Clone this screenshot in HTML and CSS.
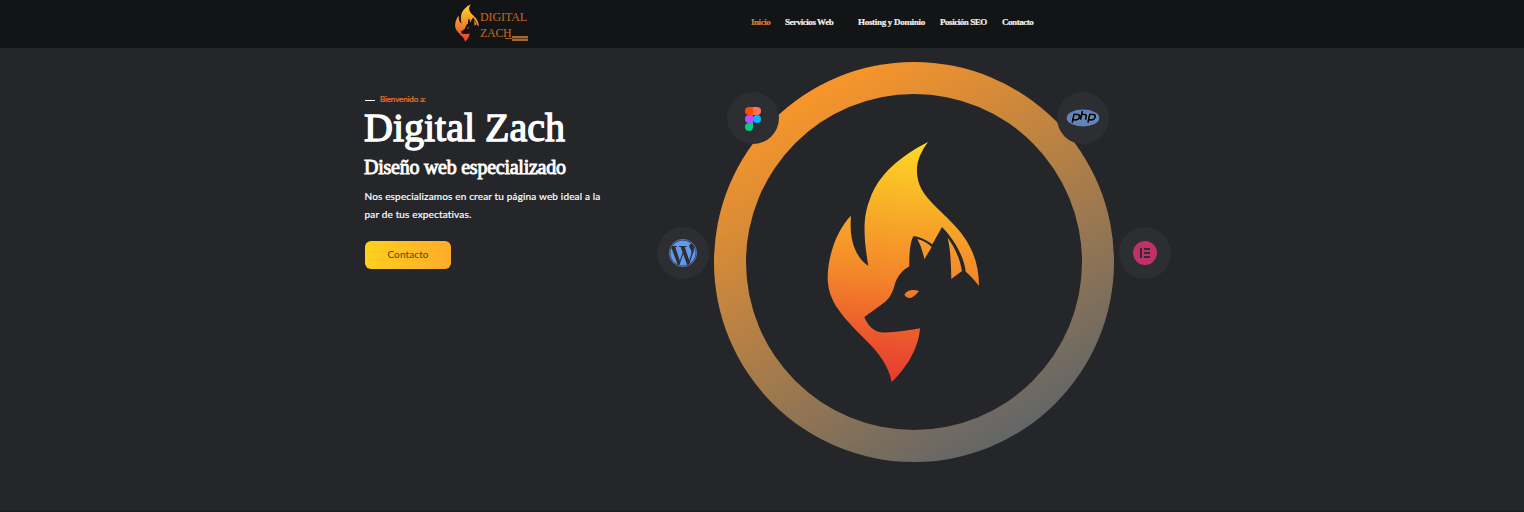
FILE: index.html
```html
<!DOCTYPE html>
<html lang="es">
<head>
<meta charset="utf-8">
<title>Digital Zach</title>
<link rel="stylesheet" href="styles.css">
</head>
<body>
<svg class="defs" width="0" height="0" aria-hidden="true">
  <defs>
    <linearGradient id="fire" gradientUnits="userSpaceOnUse" x1="640" y1="276" x2="590" y2="996">
      <stop offset="0" stop-color="#ffd724"/>
      <stop offset=".3" stop-color="#f7ac28"/>
      <stop offset=".58" stop-color="#f3832a"/>
      <stop offset=".8" stop-color="#ec5a2d"/>
      <stop offset="1" stop-color="#e73a30"/>
    </linearGradient>
    <symbol id="fox" viewBox="381 273 459 726">
      <path fill="url(#fire)" d="M684 276C655 315 646 350 653 384C662 436 706 466 750 512C803 563 837 624 837 708Q815 679 797 665C793 620 760 565 726 531L697 583Q668 562 641 558C631 572 627 610 628 649C606 661 589 682 582 712C574 738 562 752 546 763L493 801C502 826 522 844 542 847C575 850 625 841 660 835C656 893 621 953 575 996C567 950 537 909 500 873C430 802 383 757 383 682C384 610 415 534 453 497C447 565 464 620 505 648C490 560 488 500 510 447C535 374 600 319 684 276Z"/>
      <path fill="url(#fire)" d="M652 567Q677 573 695 591L673 628Q667 594 652 567ZM743 563C763 590 780 626 786 663L754 687C753 638 751 595 743 563ZM613 734C622 719 640 718 657 723C645 739 635 744 627 744Q617 742 613 734Z"/>
    </symbol>
  </defs>
</svg>

<header class="header">
  <a class="logo">
    <svg class="logo-mark" viewBox="381 273 459 726"><use href="#fox" x="381" y="273" width="459" height="726"/></svg>
    <span class="logo-name"><span>DIGITAL</span><span class="logo-second">ZACH<i class="logo-bars"></i></span></span>
  </a>
  <nav class="nav">
    <a class="active">Inicio</a>
    <a>Servicios Web</a>
    <a class="wide">Hosting y Dominio</a>
    <a>Posición SEO</a>
    <a>Contacto</a>
  </nav>
</header>

<main class="hero">
  <section class="intro">
    <p class="welcome">Bienvenido a:</p>
    <h1>Digital Zach</h1>
    <h2>Diseño web especializado</h2>
    <p class="text">Nos especializamos en crear tu página web ideal a la<br>par de tus expectativas.</p>
    <a class="button">Contacto</a>
  </section>

  <section class="stage">
    <div class="ring"><div class="ring-inner">
      <svg class="fox" viewBox="381 273 459 726"><use href="#fox" x="381" y="273" width="459" height="726"/></svg>
    </div></div>

    <div class="badge figma">
      <svg width="16" height="24" viewBox="0 0 16 24">
        <path fill="#ff4a00" d="M8 0H4a4 4 0 0 0 0 8h4z"/>
        <path fill="#ff7262" d="M8 0h4a4 4 0 0 1 0 8H8z"/>
        <path fill="#b84fff" d="M8 8H4a4 4 0 0 0 0 8h4z"/>
        <circle fill="#00b6ff" cx="12" cy="12" r="4"/>
        <path fill="#00cf7c" d="M8 16H4a4 4 0 1 0 4 4z"/>
      </svg>
    </div>

    <div class="badge php">
      <svg width="34" height="18" viewBox="0 0 34 18">
        <ellipse cx="17" cy="9" rx="16.3" ry="8.4" fill="#6183bb"/>
        <g fill="none">
          <path stroke="#93a9cf" stroke-width="2.6" d="M6.2 13.7L8 5.3h2.8c2.6 0 3 1.2 2.6 2.8c-.5 2-1.7 2.7-3.5 2.7H7.4M16.4 1.9l-1.9 8.9M16 5.3h2.2c1.8 0 2.4.7 2 2.3l-.7 3.2M21.9 13.7l1.8-8.4h2.8c2.6 0 3 1.2 2.6 2.8c-.5 2-1.7 2.7-3.5 2.7h-2.5"/>
          <path stroke="#07090d" stroke-width="1.8" d="M6.2 13.7L8 5.3h2.8c2.6 0 3 1.2 2.6 2.8c-.5 2-1.7 2.7-3.5 2.7H7.4M16.4 1.9l-1.9 8.9M16 5.3h2.2c1.8 0 2.4.7 2 2.3l-.7 3.2M21.9 13.7l1.8-8.4h2.8c2.6 0 3 1.2 2.6 2.8c-.5 2-1.7 2.7-3.5 2.7h-2.5"/>
        </g>
      </svg>
    </div>

    <div class="badge wordpress">
      <svg width="28" height="28" viewBox="0 0 24 24" fill="#6398ec">
        <path d="M21.469 6.825c.84 1.537 1.318 3.3 1.318 5.175 0 3.979-2.156 7.456-5.363 9.325l3.295-9.527c.615-1.54.82-2.771.82-3.864 0-.405-.026-.78-.07-1.11m-7.981.105c.647-.03 1.232-.105 1.232-.105.582-.075.514-.93-.067-.899 0 0-1.755.135-2.88.135-1.064 0-2.85-.15-2.85-.15-.585-.03-.661.855-.075.885 0 0 .54.061 1.125.09l1.68 4.605-2.37 7.08L5.354 6.9c.649-.03 1.234-.1 1.234-.1.585-.075.516-.93-.065-.896 0 0-1.746.138-2.874.138-.2 0-.438-.008-.69-.015C4.911 3.15 8.235 1.215 12 1.215c2.809 0 5.365 1.072 7.286 2.833-.046-.003-.091-.009-.141-.009-1.06 0-1.812.923-1.812 1.914 0 .89.513 1.643 1.06 2.531.411.72.89 1.643.89 2.977 0 .915-.354 1.994-.821 3.479l-1.075 3.585-3.9-11.61zM12 22.784c-1.059 0-2.081-.153-3.048-.437l3.237-9.406 3.315 9.087c.024.053.05.101.078.149-1.12.393-2.325.609-3.582.609M1.211 12c0-1.564.336-3.05.935-4.39L7.29 21.709C3.694 19.96 1.212 16.271 1.211 12"/>
        <circle cx="12" cy="12" r="11.7" fill="none" stroke="#6398ec" stroke-width=".6"/>
      </svg>
    </div>

    <div class="badge elementor">
      <svg width="24" height="24" viewBox="0 0 24 24">
        <circle cx="12" cy="12" r="12" fill="#c2306c"/>
        <path fill="#2d2e32" d="M7 7h2v10H7zM11 7h6v2h-6zM11 11h6v2h-6zM11 15h6v2h-6z"/>
      </svg>
    </div>
  </section>
</main>
</body>
</html>
```

FILE: styles.css
```css
* { box-sizing: border-box; }

body {
  margin: 0;
  height: 512px;
  overflow: hidden;
  background: #25262a;
  color: #fff;
  font-family: Lato, sans-serif;
  display: flex;
  flex-direction: column;
}

.defs { position: absolute; }

h1, h2, p { margin: 0; }

.header {
  height: 48px;
  flex: none;
  background: #131415;
  display: flex;
  align-items: flex-start;
  padding-left: 455px;
}

.logo {
  width: 296px;
  display: flex;
  align-items: flex-start;
  padding-top: 4px;
}

.logo-mark { width: 24px; height: 38px; }

.logo-name {
  display: flex;
  flex-direction: column;
  padding: 5px 0 0 1px;
  font: 12px/16px "Liberation Serif", serif;
  letter-spacing: -0.1px;
  color: #c8681f;
}

.logo-second { display: flex; letter-spacing: -0.3px; }

.logo-bars {
  width: 16px;
  height: 5px;
  margin: 11px 0 0 1px;
  border-top: 2px solid #a8652e;
  border-bottom: 2px solid #a8652e;
  background: #5a3a22;
  box-shadow: -9px 0 0 -2px #a8652e;
}

.nav {
  display: grid;
  grid-template-columns: 34px 73px 82px 62px 34px;
  font: bold 9px/14px "Liberation Serif", serif;
  letter-spacing: -0.45px;
  padding-top: 15px;
  white-space: nowrap;
  color: #f1f1f1;
  -webkit-text-stroke: 0.2px;
}

.nav .wide { letter-spacing: -0.3px; }

.nav .active { color: #d9822b; }

.hero {
  flex: 1;
  display: flex;
  padding-left: 364px;
  border-bottom: 2px solid #1f1e23;
}

.intro {
  width: 292px;
  padding-top: 45px;
  display: flex;
  flex-direction: column;
  align-items: flex-start;
}

.welcome {
  display: flex;
  align-items: center;
  gap: 5px;
  padding-left: 1px;
  font-size: 8px;
  line-height: 12px;
  letter-spacing: -0.12px;
  color: #f0792b;
  -webkit-text-stroke: 0.2px;
}

.welcome::before {
  content: "";
  width: 10px;
  height: 1px;
  margin-top: 2px;
  background: #fff;
}

h1 {
  font: 40px/46px "Liberation Serif", serif;
  -webkit-text-stroke: 1.3px #fff;
}

h2 {
  margin-top: 4px;
  font: 20px/24px "Liberation Serif", serif;
  letter-spacing: -0.25px;
  -webkit-text-stroke: 0.9px #fff;
}

.text {
  margin-top: 8px;
  padding-left: 0.5px;
  font-size: 10px;
  line-height: 18px;
  letter-spacing: 0.16px;
  white-space: nowrap;
  -webkit-text-stroke: 0.2px #fff;
}

.button {
  width: 86px;
  height: 28px;
  margin: 18px 0 0 1px;
  border-radius: 6px;
  background: linear-gradient(100deg, #ffd11c, #ffaa2b);
  color: #54401a;
  font-size: 10px;
  line-height: 26px;
  letter-spacing: 0.1px;
  text-align: center;
}

.stage {
  position: relative;
  width: 516px;
  padding: 14px 0 0 58px;
}

.ring {
  width: 400px;
  height: 400px;
  padding: 32px;
  border-radius: 50%;
  background: linear-gradient(150deg, #f7952a 14%, #606568 88%);
}

.ring-inner {
  height: 336px;
  border-radius: 50%;
  background: #25262a;
  padding: 47px 0 0 81px;
}

.fox { display: block; width: 153px; height: 242px; }

.badge {
  position: absolute;
  width: 52px;
  height: 52px;
  border-radius: 50%;
  background: #2d2e32;
  display: flex;
  align-items: center;
  justify-content: center;
}

.figma { left: 70.5px; top: 44px; padding-top: 1px; }
.php { left: 401px; top: 44px; }
.wordpress { left: 0.5px; top: 178.5px; }
.elementor { left: 462.5px; top: 178.5px; }
```
